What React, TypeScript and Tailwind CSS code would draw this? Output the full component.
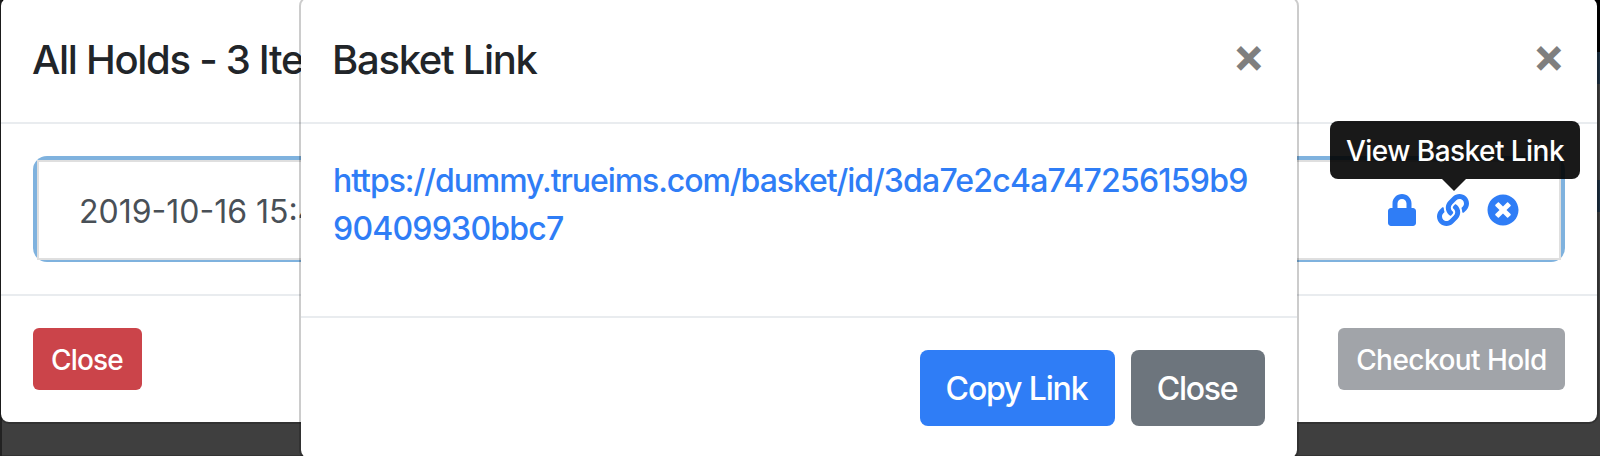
import { FaLink, FaLock, FaTimesCircle } from 'react-icons/fa';

const holds = [{ id: 1, date: '2019-10-16 15:42:10' }];

const basketBase = 'https://dummy.trueims.com/basket/id/';
const basketId = '3da7e2c4a747256159b990409930bbc7';

export default function App() {
  return (
    <div className="relative h-[456px] w-[1600px] overflow-hidden bg-[#3f3f3f] font-['Inter',sans-serif] text-[32px] leading-[48px] text-[#212529]">
      {/* Page behind the backdrop */}
      <div className="absolute inset-0 flex flex-col border-l-2 border-[#222222]">
        <div className="h-[52px] bg-black" />
        <div className="h-8 bg-[#1c2f40]" />
        <div className="h-24" />
        <div className="h-8 bg-[#1c2f40]" />
        <div className="grow border-b border-[#333333]" />
      </div>

      {/* All Holds modal */}
      <div className="relative -mt-1 -ml-px w-[1600px] rounded-[10px] border-2 border-black/20 bg-white bg-clip-padding">
        <div className="flex items-start justify-between border-b-2 border-[#e9ecef] p-8">
          <h5 className="-ml-px text-[40px] leading-[60px] font-medium tracking-[-1.3px]">All Holds - 3 Items</h5>
          <button className="pt-px text-[48px] leading-[48px] font-bold text-[#7f7f7f]">×</button>
        </div>

        <div className="p-8">
          {holds.map((hold) => (
            <div key={hold.id} className="rounded-[14px] bg-[#7fb2de] px-1 pt-1 pb-0.5">
              <div className="flex h-[100px] items-center justify-between border-2 border-[#dfdfdf] bg-white px-10 text-[#495057]">
                <span className="pt-[3px]">{hold.date}</span>
                <div className="flex items-center text-[#2f7df6]">
                  <FaLock className="mr-[21px] h-8 w-7" />
                  <div className="relative mr-[18px]">
                    <FaLink className="size-8" />
                    <div className="absolute bottom-[47px] left-[-107px] flex h-[58px] w-[250px] items-center justify-center rounded-lg bg-black/90 pt-0.5 text-[28px] leading-[42px] font-[450] tracking-[-0.55px] whitespace-nowrap text-white">
                      View Basket Link
                      <span className="absolute top-full left-[112px] border-x-12 border-t-12 border-x-transparent border-t-black/90" />
                    </div>
                  </div>
                  <FaTimesCircle className="size-8" />
                </div>
              </div>
            </div>
          ))}
        </div>

        <div className="flex items-center justify-between border-t-2 border-[#e9ecef] p-8 text-[28px] leading-[42px] font-[450] text-white">
          <button className="h-[62px] w-[109px] rounded-[6px] bg-[#cb444a] pt-0.5 pr-px tracking-[-0.85px]">Close</button>
          <button className="h-[62px] w-[227px] rounded-[6px] bg-[#a1a4a9] pt-0.5 tracking-[-0.55px]">Checkout Hold</button>
        </div>
      </div>

      {/* Basket Link modal */}
      <div className="absolute -top-1 left-[299px] w-[1000px] rounded-[10px] border-2 border-black/20 bg-white bg-clip-padding">
        <div className="flex items-start justify-between border-b-2 border-[#e9ecef] p-8">
          <h5 className="-ml-px text-[40px] leading-[60px] font-medium tracking-[-1.3px]">Basket Link</h5>
          <button className="pt-px text-[48px] leading-[48px] font-bold text-[#7f7f7f]">×</button>
        </div>
        <div className="p-8">
          <p className="mt-px mb-[31px] font-[450] tracking-[-0.78px] break-all text-[#2f7df6]">
            <span className="tracking-[-1.07px]">{basketBase}</span>
            {basketId}
          </p>
        </div>
        <div className="flex items-center justify-end gap-4 border-t-2 border-[#e9ecef] p-8 font-[450] text-white">
          <button className="h-[76px] w-[195px] rounded-lg bg-[#2f7df6] pt-0.5 pr-0.5 tracking-[-1.15px]">Copy Link</button>
          <button className="h-[76px] w-[134px] rounded-lg bg-[#6d757d] pt-0.5 pr-0.5 tracking-[-1.3px]">Close</button>
        </div>
      </div>
    </div>
  );
}
